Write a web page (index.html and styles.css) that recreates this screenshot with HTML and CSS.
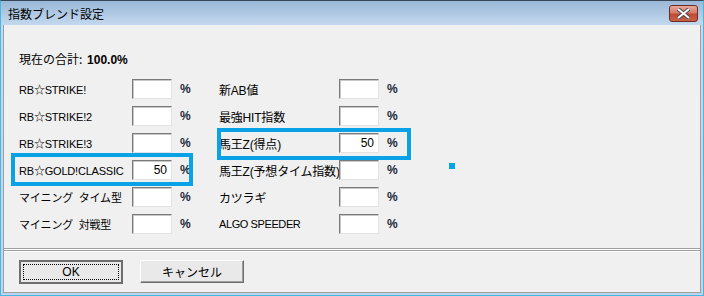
FILE: index.html
```html
<!DOCTYPE html>
<html lang="ja">
<head>
    <meta charset="UTF-8">
    <title>指数ブレンド設定</title>
    <link rel="stylesheet" href="styles.css">
</head>
<body>
    <div class="window">
        <div class="titlebar">
            <span class="title">指数ブレンド設定</span>
            <button class="close">
                <svg width="17" height="11" viewBox="0 0 17 11">
                    <path d="M3 1 L8.5 5.5 L14 1 M3 10 L8.5 5.5 L14 10" stroke="#4a4a4a" stroke-width="4" fill="none"/>
                    <path d="M3 1 L8.5 5.5 L14 1 M3 10 L8.5 5.5 L14 10" stroke="#fff" stroke-width="2" fill="none"/>
                </svg>
            </button>
        </div>
        <div class="frame">
            <div class="client">
                <div class="content">
                    <p class="total">現在の合計: <b>100.0%</b></p>
                    <div class="cols">
                        <div class="col left">
                            <div class="row"><label>RB☆STRIKE!</label><input type="text"><span>%</span></div>
                            <div class="row"><label>RB☆STRIKE!2</label><input type="text"><span>%</span></div>
                            <div class="row"><label>RB☆STRIKE!3</label><input type="text"><span>%</span></div>
                            <div class="row"><label>RB☆GOLD!CLASSIC</label><input type="text" value="50"><span>%</span></div>
                            <div class="row"><label>マイニング&nbsp;&nbsp;タイム型</label><input type="text"><span>%</span></div>
                            <div class="row"><label>マイニング&nbsp;&nbsp;対戦型</label><input type="text"><span>%</span></div>
                        </div>
                        <div class="col right">
                            <div class="row"><label>新AB値</label><input type="text"><span>%</span></div>
                            <div class="row"><label>最強HIT指数</label><input type="text"><span>%</span></div>
                            <div class="row"><label>馬王Z(得点)</label><input type="text" value="50"><span>%</span></div>
                            <div class="row"><label>馬王Z(予想タイム指数)</label><input type="text"><span>%</span></div>
                            <div class="row"><label>カツラギ</label><input type="text"><span>%</span></div>
                            <div class="row"><label class="small">ALGO SPEEDER</label><input type="text"><span>%</span></div>
                        </div>
                    </div>
                    <!-- annotation marks drawn over the dialog -->
                    <div class="mark mark-left"></div>
                    <div class="mark mark-right"></div>
                    <div class="dot"></div>
                </div>
                <div class="sep"></div>
                <div class="footer">
                    <button class="btn default"><span>OK</span></button>
                    <button class="btn">キャンセル</button>
                </div>
            </div>
        </div>
    </div>
</body>
</html>
```

FILE: styles.css
```css
*{
    margin: 0;
    padding: 0;
    box-sizing: border-box;
}
body{
    background: #fff;
    font-family: "Liberation Sans", "Noto Sans CJK JP", sans-serif;
    font-size: 12px;
    color: #000;
}
.window{
    width: 704px;
    height: 296px;
    display: flex;
    flex-direction: column;
    border: 1px solid #46b8e6;
    border-top-color: #3a4656;
    background: linear-gradient(#9ab8d7, #c3d8ee 24px, #bcd5ee);
}
.titlebar{
    height: 24px;
    display: flex;
    align-items: center;
    justify-content: space-between;
    padding: 0 5px 0 7px;
}
.title{
    font-family: "Noto Sans CJK JP", sans-serif;
    font-size: 12px;
    padding-top: 1px;
}
.close{
    width: 29px;
    height: 17px;
    margin-top: 1px;
    border: 1px solid #6e2a24;
    border-radius: 3px;
    background: linear-gradient(#e9a99c, #d47a68 45%, #c04a34 55%, #c8624a);
    display: flex;
    align-items: center;
    justify-content: center;
}
.frame{
    flex: 1;
    padding: 0 2px 2px 2px;
    display: flex;
}
.client{
    flex: 1;
    background: #f0f0f0;
    border: 1px solid #a0a0a0;
    border-top: none;
    display: flex;
    flex-direction: column;
}
.content{
    position: relative;
    height: 223px;
    padding: 27px 0 0 15px;
}
.total{
    font-family: "Noto Sans CJK JP", sans-serif;
    line-height: 14px;
    margin-bottom: 12px;
}
.total b{
    font-family: "Liberation Sans", sans-serif;
    font-weight: bold;
    margin-left: 2px;
}
.cols{
    display: flex;
}
.col{
    display: flex;
    flex-direction: column;
    gap: 7px;
}
.col.left{
    width: 200px;
}
.row{
    display: grid;
    grid-template-columns: 113px 40px auto;
    align-items: center;
    height: 20px;
}
.col.right .row{
    grid-template-columns: 120px 40px auto;
}
.row label{
    font-size: 11px;
    white-space: nowrap;
    letter-spacing: -0.2px;
}
.col.right .row label{
    font-size: 12px;
}
.col.right .row label.small{
    font-size: 11px;
    letter-spacing: -0.4px;
}
.row input{
    width: 40px;
    height: 20px;
    border: 1px solid;
    border-color: #7a7a7a #e3e3e3 #e3e3e3 #7a7a7a;
    box-shadow: inset 1px 1px 0 #c8c8c8;
    background: #fff;
    outline: none;
    text-align: right;
    padding: 0 4px;
    font-family: "Liberation Sans", sans-serif;
    font-size: 12px;
}
.row span{
    margin-left: 8px;
    font-size: 12px;
    font-weight: bold;
    color: #1a2a3a;
}
.mark{
    position: absolute;
    border: 4px solid #0aa2e6;
}
.mark-left{
    left: 7px;
    top: 128px;
    width: 182px;
    height: 33px;
}
.mark-right{
    left: 213px;
    top: 103px;
    width: 194px;
    height: 32px;
}
.dot{
    position: absolute;
    left: 445px;
    top: 138px;
    width: 6px;
    height: 6px;
    background: #0aa2e6;
}
.sep{
    height: 4px;
    border-top: 1px solid #a0a0a0;
    border-bottom: 1px solid #fff;
    background: linear-gradient(#fff 1px, #a0a0a0 1px, #a0a0a0 2px, #f0f0f0 2px);
}
.footer{
    flex: 1;
    display: flex;
    gap: 17px;
    padding: 8px 0 0 15px;
    align-items: flex-start;
}
.btn{
    width: 104px;
    height: 23px;
    font-family: "Noto Sans CJK JP", sans-serif;
    font-size: 12px;
    background: #e9e9e9;
    border: 1px solid;
    border-color: #fff #6d6d6d #6d6d6d #fff;
    box-shadow: inset -1px -1px 0 #a0a0a0;
}
.btn.default{
    height: 24px;
    border: 2px solid #6e6e6e;
    box-shadow: none;
    padding: 2px;
}
.btn.default span{
    display: flex;
    height: 100%;
    align-items: center;
    justify-content: center;
    border: 1px dotted #000;
    font-family: "Liberation Sans", sans-serif;
}
```
